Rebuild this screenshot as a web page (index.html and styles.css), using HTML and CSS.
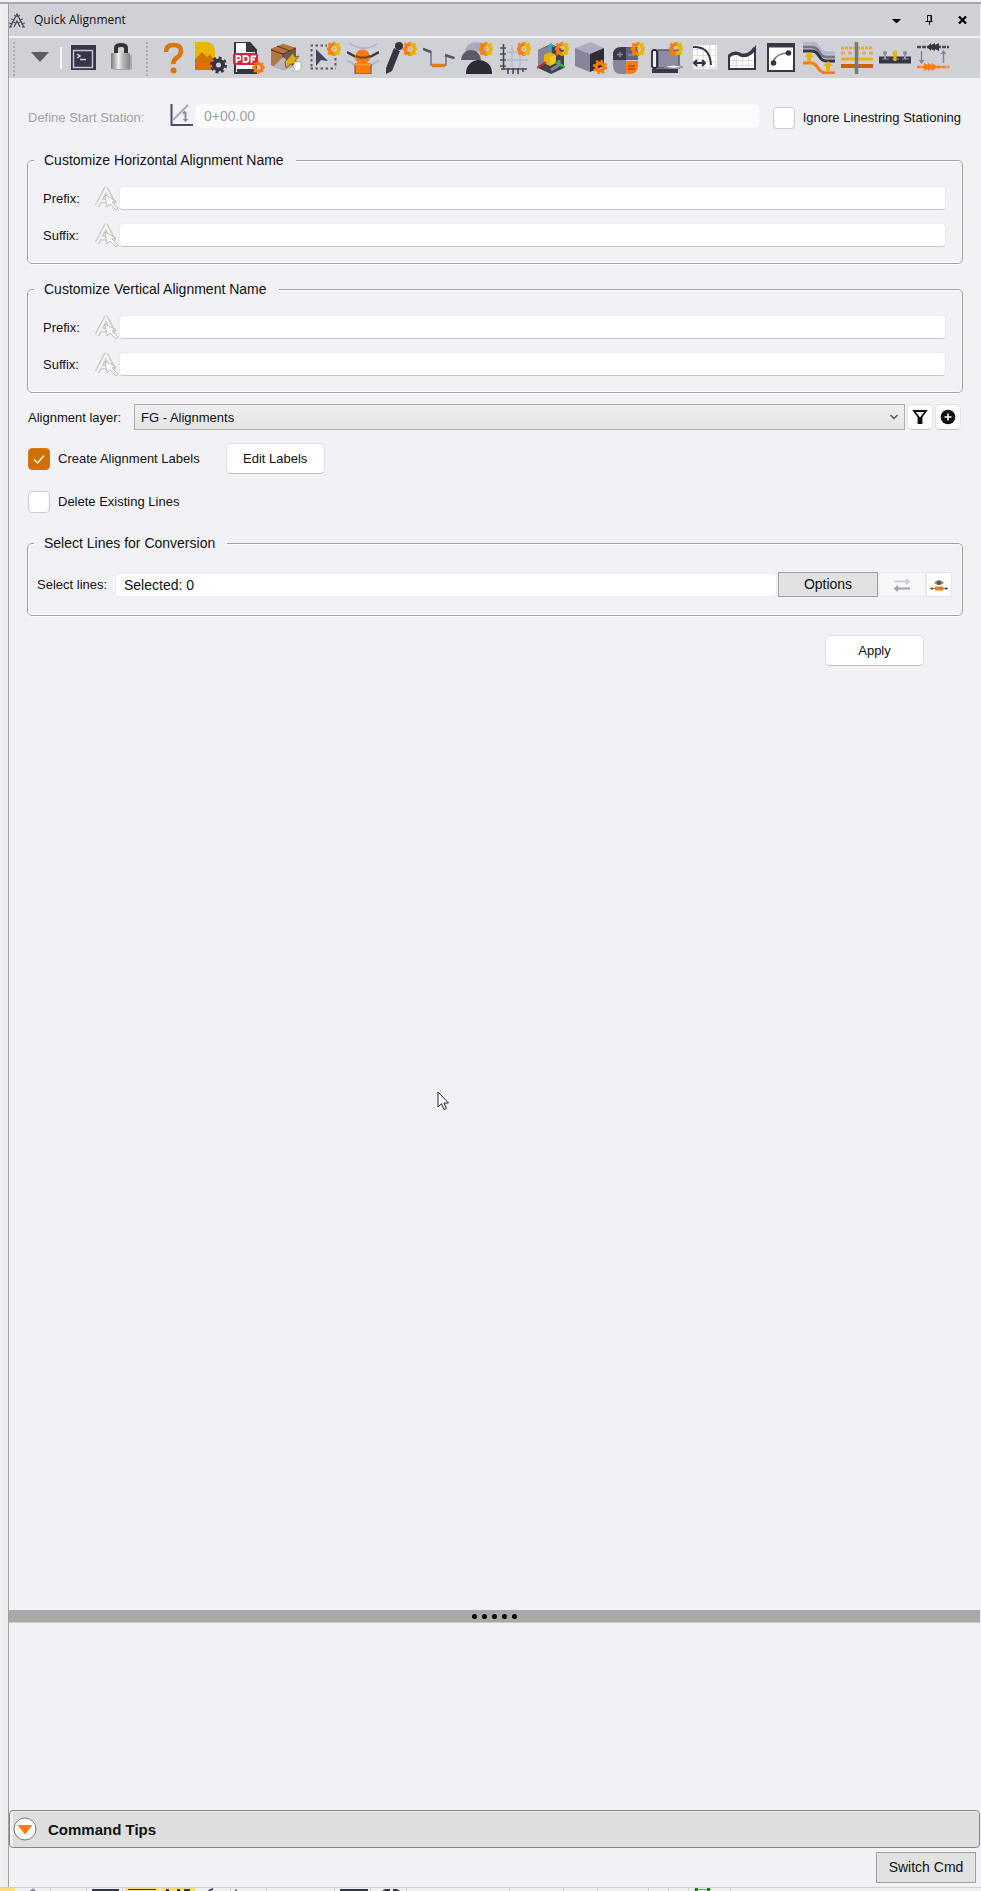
FILE: index.html
```html
<!DOCTYPE html>
<html lang="en">
<head>
<meta charset="utf-8">
<title>Quick Alignment</title>
<link rel="stylesheet" href="styles.css">
</head>
<body>
<svg class="defs" aria-hidden="true">
  <defs>
    <symbol id="gear" viewBox="0 0 14 14">
      <path d="M7 0v2M7 12v2M0 7h2M1.500 1.500l2 2M1.500 12.500l2-2" stroke="#fb7d0c" stroke-width="3"/>
      <path d="M14 7h-2M12.500 1.500l-2 2M12.500 12.500l-2-2" stroke="#eab308" stroke-width="3"/>
      <path d="M7 2.500A4.500 4.500 0 0 0 7 11.500" fill="none" stroke="#fb7d0c" stroke-width="3.600"/>
      <path d="M7 2.500A4.500 4.500 0 0 1 7 11.500" fill="none" stroke="#eab308" stroke-width="3.600"/>
      <circle cx="7" cy="7" r="1.200" fill="#eab308"/>
    </symbol>
    <symbol id="pick" viewBox="0 0 24 24">
      <path d="M2 20L11 3l8 15M6 15h8" fill="none" stroke="#c9c9c9" stroke-width="5" stroke-linejoin="round"/>
      <path d="M2 20L11 3l7 14M6 15h8" fill="none" stroke="#f4f4f2" stroke-width="2.500"/>
      <path d="M10 9l11 6-4 1 6 6-2 2-6-6-3 3z" fill="#fff" stroke="#bdbbb8"/>
    </symbol>
  </defs>
</svg>
<div class="window">
  <header class="titlebar">
    <svg class="logo" viewBox="0 0 16 15" fill="none" stroke="#4b4a5a"><path d="M1 14L8 1l7 13M5 14l3-6 3 6" stroke-width="1.300"/><path d="M0 10l4 1M2 6l4 1M5 2l3 2M16 10l-4 1M14 6l-4 1M11 2L8 4M0 14h3M13 14h3M4 9l3 1M12 9l-3 1"/></svg>
    <h1 class="title">Quick Alignment</h1>
    <button class="winbtn" aria-label="Window menu"><svg width="9" height="10" viewBox="0 0 9 10"><path d="M0 4h9L5 8H4z"/></svg></button>
    <button class="winbtn" aria-label="Pin"><svg width="9" height="10" viewBox="0 0 9 10"><path d="M2.500 6V.5h4V6M0.500 6.500h7M4.500 6v4M6 1v5" fill="none" stroke="#000"/></svg></button>
    <button class="winbtn" aria-label="Close"><svg width="9" height="10" viewBox="0 0 9 10"><path d="M1 1.500l7 7M8 1.500l-7 7" stroke="#000" stroke-width="2.300"/></svg></button>
  </header>
  <nav class="toolbar" aria-label="Commands">
    <span class="grip"></span>
    <button class="tool tool-menu" aria-label="More"><svg viewBox="0 0 32 32"><path d="M7 10h18l-9 10z" fill="#5d5e5d"/></svg></button>
    <span class="sep"></span>
    <button class="tool" aria-label="Command line"><svg viewBox="0 0 32 32"><path d="M4 3h25v25H4z" fill="#36364a"/><path d="M6.500 8.500h19v17h-19z" fill="none" stroke="#c3c3d0" stroke-width="1.500"/><path d="M10 12l3 2-3 2M13 17.500h6" fill="none" stroke="#d3d3de" stroke-width="1.500"/></svg></button>
    <button class="tool" aria-label="Lock"><svg viewBox="0 0 32 32"><defs><linearGradient id="metal"><stop offset="0" stop-color="#777"/><stop offset=".4" stop-color="#efefef"/><stop offset=".6" stop-color="#bbb"/><stop offset="1" stop-color="#858585"/></linearGradient></defs><path d="M9 13h18v15H9z" fill="#aaa"/><path d="M11 12V6q0-3 5-3t5 3v6" fill="none" stroke="#323435" stroke-width="4"/><rect x="6" y="11" width="19" height="16" rx="1" fill="url(#metal)"/></svg></button>
    <span class="grip grip-mid"></span>
    <div class="tools">
    <button class="tool" aria-label="Help"><svg viewBox="0 0 32 32"><path d="M9 10q0-7 7.500-7T24 9q0 4-4 6.500T16.500 22" fill="none" stroke="#db750a" stroke-width="4.500"/><circle cx="16.500" cy="28.500" r="3" fill="#db750a"/></svg></button>
    <button class="tool" aria-label="Image settings"><svg viewBox="0 0 32 32"><path d="M0 0h13q7 2 7 10v14H0z" fill="#ebb600"/><path d="M0 28V17l7-7 5 5 3-3 5 7v9z" fill="#d67200"/><circle cx="23.500" cy="23" r="4.500" fill="none" stroke="#353440" stroke-width="4"/><circle cx="23.500" cy="23" r="7" fill="none" stroke="#353440" stroke-width="3" stroke-dasharray="2.750"/></svg></button>
    <button class="tool" aria-label="PDF"><svg viewBox="0 0 32 32"><path d="M2 0h14l7 8v23H2z" fill="#fff" stroke="#36343e" stroke-width="2"/><path d="M13 0h3l8 10H13zM4 27h18v3H4z" fill="#36343e"/><rect x="0" y="11" width="25" height="12" rx="3" fill="#d9223b"/><path d="M3.500 21v-7h2q2 0 2 2t-2 2h-2M10.500 14v6h2q3 0 3-3t-3-3zM18.500 21v-6.500H23M18.500 17.500H22" fill="none" stroke="#fff" stroke-width="1.800"/><circle cx="25.500" cy="25.500" r="3.800" fill="none" stroke="#ff7900" stroke-width="3"/><path d="M25.500 19v3M25.500 29v3M19 25.500h3M29 25.500h3M21 21l2 2M30 21l-2 2M21 30l2-2M30 30l-2-2" stroke="#ff7900" stroke-width="2"/></svg></button>
    <button class="tool" aria-label="Package"><svg viewBox="0 0 32 32"><path d="M0 7l12-5 13 4v17L12 28 0 23z" fill="#6f5a4c"/><path d="M0 7l12-5 13 4-13 6z" fill="#bb7638"/><path d="M0 8l12 5v13L0 23z" fill="#b07a48"/><path d="M6 4l13 5M12 12v5M0 8l12 4 13-6" fill="none" stroke="#4a3424"/><path d="M2 25l10-10 10 9-10 4z" fill="#b8b5bd"/><path d="M14 20l8-9 2 4 4-1-4 5 4 2-8 1-5 4z" fill="#e1ab13" stroke="#77603a"/><path d="M24 20h6v5h1l-3 4h-6l2-2-2-2z" fill="#fff" stroke="#b9b7b2"/></svg></button>
    <button class="tool" aria-label="Select points"><svg viewBox="0 0 32 32"><path d="M1.500 3.500H18M1.500 26.500H27M2.500 7v18M26.500 16v9" fill="none" stroke="#5a5a63" stroke-width="2" stroke-dasharray="2.500 2.500"/><path d="M7 7l12 12-7-1-5 6z" fill="#45445a"/><use href="#gear" x="18" y="0" width="14" height="14"/></svg></button>
    <button class="tool" aria-label="Surveyor"><svg viewBox="0 0 32 32"><path d="M2 1q14 10 28 1M0 19q9 2 10 12M32 19q-9 2-10 12" fill="none" stroke="#b6b4cf" stroke-width="1.800"/><path d="M0 10l9 5M32 10l-9 5" stroke="#3b3b46" stroke-width="2.500"/><path d="M8 22h16v10H8z" fill="#ff7b05" stroke="#55545b"/><circle cx="15.500" cy="15" r="7.500" fill="#ff7b05"/><path d="M7 22.500h17" stroke="#eaa23b" stroke-width="1.500"/><path d="M9 14l5 2 2-1 2 1 5-2" fill="none" stroke="#6b4a35" stroke-width="2"/></svg></button>
    <button class="tool" aria-label="Edit tool"><svg viewBox="0 0 32 32"><path d="M9 6l6 3-8 20-6 3V26z" fill="#36343f"/><circle cx="14" cy="4" r="4" fill="#36343f"/><use href="#gear" x="18" y="0" width="14" height="14"/></svg></button>
    <button class="tool" aria-label="Profile"><svg viewBox="0 0 32 32"><path d="M0 7l8 3v13h15V14l9 2" fill="none" stroke="#77768a" stroke-width="1.600"/><path d="M0 7l8 3M22 13l9 3" stroke="#55545f" stroke-width="2.500"/><path d="M9 23.500h13" stroke="#e57916" stroke-width="3.500"/></svg></button>
    <button class="tool" aria-label="Site"><svg viewBox="0 0 32 32"><path d="M4 10a11 10 0 0 1 22 0z" fill="#aaa8c1"/><path d="M0 18a10 10 0 0 1 20 0z" fill="#5c5a69"/><path d="M5 32a13 13 0 0 1 26-2v2z" fill="#2d2b36"/><use href="#gear" x="18" y="0" width="14" height="14"/></svg></button>
    <button class="tool" aria-label="Scale"><svg viewBox="0 0 32 32"><path d="M8 18h21M8 10h12M13 3v22M21 12v13" stroke="#b9b8ce" stroke-width="1.500"/><path d="M4.500 2v26M1 6h6M1 12h6M1 18h6M1 24h6M2 27h26M9 26v6M14 26v6M19 26v6M24 26v4" stroke="#4b4957" stroke-width="1.600"/><use href="#gear" x="18" y="0" width="14" height="14"/></svg></button>
    <button class="tool" aria-label="3D axes"><svg viewBox="0 0 32 32"><path d="M1 8l13-6 13 6v18l-13 6-13-6z" fill="#414150"/><path d="M1 8l13-5v15L1 25z" fill="#858494"/><path d="M14 28l8-5v-5" stroke="#858494" stroke-width="3" fill="none"/><path d="M7 13l6-3 6 3v8l-6 3-6-3z" fill="#eab308"/><path d="M13 15v8l6-3v-7z" fill="#f4c91d"/><path d="M14 11V2M11 5l3-3 3 3" stroke="#35aebf" stroke-width="1.700" fill="none"/><path d="M9 20l-9 6" stroke="#d52634" stroke-width="2"/><path d="M18 20l10 5" stroke="#22c646" stroke-width="2"/><use href="#gear" x="18" y="0" width="14" height="14"/></svg></button>
    <button class="tool" aria-label="Solid"><svg viewBox="0 0 32 32"><path d="M0 6L16 0l13 6-14 6z" fill="#aeabc5"/><path d="M0 6l15 6v18L0 24z" fill="#86859b"/><path d="M15 12l14-6v18l-14 6z" fill="#2e2c37"/><circle cx="25" cy="25" r="3.800" fill="none" stroke="#f97a05" stroke-width="3.400"/><circle cx="25" cy="25" r="6" fill="none" stroke="#f97a05" stroke-width="2.500" stroke-dasharray="2.350"/></svg></button>
    <button class="tool" aria-label="Calculator"><svg viewBox="0 0 32 32"><path d="M0 18V13Q0 5 8 5h5v13z" fill="#3a3947"/><path d="M13 5h12v13H13z" fill="#65637a"/><path d="M0 18h13v14H8q-8 0-8-9z" fill="#86859b"/><path d="M13 19h12v4q0 9-8 9h-4z" fill="#ff7c0a"/><path d="M4 12.500h6M7 9.500v6M15 13h7" stroke="#8b89a0" stroke-width="1.300"/><path d="M15 24h7M15 27h7" stroke="#a94900" stroke-width="1.500"/><use href="#gear" x="18" y="0" width="14" height="14"/></svg></button>
    <button class="tool" aria-label="Sheet"><svg viewBox="0 0 32 32"><path d="M7 8h21v18H7z" fill="#8e8ca2" stroke="#5b596b" stroke-width="1.500"/><rect x="1" y="8" width="5" height="18" rx="2" fill="#eeedf5" stroke="#292732" stroke-width="1.800"/><path d="M1 29h26" stroke="#393745" stroke-width="4"/><path d="M13 25q9-4 19 0-9 3-19 0z" fill="#eeedf5" stroke="#858494"/><use href="#gear" x="18" y="0" width="14" height="14"/></svg></button>
    <button class="tool" aria-label="Curve offset"><svg viewBox="0 0 32 32"><path d="M4 3h24v24H4z" fill="#fff"/><path d="M8.500 3v24M14.500 3v24M20.500 3v24M26.500 3v24M4 7.500h24M4 13.500h24M4 19.500h24M4 25.500h24" stroke="#e2e2e6"/><path d="M4 5q17-1 18 18M6 21h9M8 18l-3 3 3 3M13 18l3 3-3 3" fill="none" stroke="#353343" stroke-width="2"/></svg></button>
    <button class="tool" aria-label="Terrain profile"><svg viewBox="0 0 32 32"><path d="M3 13q6-4 12 0t14-6v20H3z" fill="#fff"/><path d="M9.500 14v13M15.500 14v13M21.500 14v13M3 18.500h25M3 23.500h25" stroke="#dcdce0"/><path d="M2 14q6-5 12-1 8 2 14-7v21H2z" fill="none" stroke="#393745" stroke-width="2"/><path d="M2 14q6-5 12-1 8 2 14-7" fill="none" stroke="#393745" stroke-width="3.500"/></svg></button>
    <button class="tool" aria-label="Arc"><svg viewBox="0 0 32 32"><path d="M3 2h26v27H3z" fill="#fff" stroke="#393745" stroke-width="2"/><path d="M2 3.500h28" stroke="#393745" stroke-width="4"/><path d="M8 20q3-9 16-9" fill="none" stroke="#77768a" stroke-width="1.700"/><circle cx="8.500" cy="21" r="2.800" fill="#36343f"/><circle cx="23.500" cy="11" r="2.800" fill="#36343f"/></svg></button>
    <button class="tool" aria-label="Surface offset"><svg viewBox="0 0 32 32"><g fill="none" stroke-width="3"><path d="M0 1h9q4 0 7 5t7 5h9" stroke="#b5b3ce"/><path d="M0 5h9q4 0 7 5t7 5h9" stroke="#77768a"/><path d="M0 9h9q4 0 7 5t7 5h9" stroke="#36343f"/><path d="M0 21h8q4 0 7 5t8 5h9" stroke="#ff7a00"/></g><path d="M6 20v-6M25 29v-6" stroke="#eab308" stroke-width="4"/><path d="M1 15l5-5 5 5zM20 24l5-5 5 5z" fill="#eab308"/></svg></button>
    <button class="tool" aria-label="Cross sections"><svg viewBox="0 0 32 32"><path d="M0 6h32" stroke="#eab308" stroke-width="3" stroke-dasharray="3 1"/><path d="M0 11h32" stroke="#f0a068" stroke-width="3" stroke-dasharray="4 3"/><path d="M0 17h32" stroke="#eab308" stroke-width="3"/><path d="M0 24h32" stroke="#cc6200" stroke-width="4"/><path d="M15.500 0v32" stroke="#77777c" stroke-width="3.500"/></svg></button>
    <button class="tool" aria-label="Points on line"><svg viewBox="0 0 32 32"><path d="M0 18h32" stroke="#353441" stroke-width="7"/><path d="M3 17h7M13 17h7M23 17h7" stroke="#62616f" stroke-width="2"/><path d="M6 10v7M26 10v7" stroke="#9a99aa" stroke-width="2"/><path d="M16 10v9" stroke="#eab308" stroke-width="3"/><circle cx="6" cy="11" r="2" fill="#8a899b"/><circle cx="26" cy="11" r="2" fill="#8a899b"/><circle cx="16" cy="11" r="2.500" fill="#eab308"/></svg></button>
    <button class="tool" aria-label="Swap lines"><svg viewBox="0 0 32 32"><path d="M0 5h32" stroke="#4b4a55" stroke-width="2.500" stroke-dasharray="4 1"/><path d="M10 5l4-4v2l4-2v2l4-2v8l-4-2v2l-4-2v2z" fill="#36343f"/><path d="M0 25h32" stroke="#ff7c12" stroke-width="2.500" stroke-dasharray="4 1"/><path d="M7 21l4 2v-2l4 2v-2l6 4-6 4v-2l-4 2v-2l-4 2z" fill="#ff7c12"/><path d="M4.500 9v11M26.500 21V11" stroke="#85849a" stroke-width="1.500"/><path d="M1.500 18h6l-3 4zM23.500 12h6l-3-4z" fill="#85849a"/></svg></button>
    </div>
  </nav>
  <main class="content">
    <div class="row station">
      <label class="station-label" for="station">Define Start Station:</label>
      <span class="station-field">
        <svg class="station-icon" viewBox="0 0 24 24"><path d="M1.500 0v21H23" fill="none" stroke="#4f4d63" stroke-width="2"/><path d="M3 16L18 1" stroke="#aaa9bd" stroke-width="2.200"/><path d="M15.500 8v7M13 9.500l2.500-2" stroke="#8e8ca2" stroke-width="2" fill="none"/><path d="M12.500 15h6l-3 3z" fill="#8e8ca2"/></svg>
        <input class="textbox textbox-off" id="station" type="text" value="0+00.00" disabled>
      </span>
      <label class="check"><input type="checkbox">Ignore Linestring Stationing</label>
    </div>
    <fieldset class="group">
      <legend>Customize Horizontal Alignment Name</legend>
      <div class="field"><label for="hp">Prefix:</label><svg class="pick"><use href="#pick"/></svg><input class="textbox" id="hp" type="text"></div>
      <div class="field"><label for="hs">Suffix:</label><svg class="pick"><use href="#pick"/></svg><input class="textbox" id="hs" type="text"></div>
    </fieldset>
    <fieldset class="group">
      <legend>Customize Vertical Alignment Name</legend>
      <div class="field"><label for="vp">Prefix:</label><svg class="pick"><use href="#pick"/></svg><input class="textbox" id="vp" type="text"></div>
      <div class="field"><label for="vs">Suffix:</label><svg class="pick"><use href="#pick"/></svg><input class="textbox" id="vs" type="text"></div>
    </fieldset>
    <div class="row layer">
      <label class="layer-label" for="layer">Alignment layer:</label>
      <span class="combo">
        <select id="layer"><option>FG - Alignments</option></select>
        <svg class="chevron" viewBox="0 0 8 6"><path d="M.5 1L4 4.500 7.500 1" fill="none" stroke="#505050" stroke-width="1.400"/></svg>
      </span>
      <button class="iconbtn" aria-label="Filter"><svg viewBox="0 0 16 16"><path d="M2 2h12L9.500 8v6h-3V8z" fill="none" stroke="#111" stroke-width="1.800"/><path d="M7 8h2v6H7z" fill="#111"/></svg></button>
      <button class="iconbtn" aria-label="New layer"><svg viewBox="0 0 16 16"><circle cx="8" cy="8" r="7.300" fill="#111"/><path d="M8 4.500v7M4.500 8h7" stroke="#fff" stroke-width="1.500"/></svg></button>
    </div>
    <div class="row labels">
      <label class="check"><input type="checkbox" checked>Create Alignment Labels</label>
      <button class="btn">Edit Labels</button>
    </div>
    <div class="row delete">
      <label class="check"><input type="checkbox">Delete Existing Lines</label>
    </div>
    <fieldset class="group group-lines">
      <legend>Select Lines for Conversion</legend>
      <div class="lines">
        <label for="lines">Select lines:</label>
        <input class="textbox textbox-flat" id="lines" type="text" value="Selected: 0" readonly>
        <button class="btn-classic">Options</button>
        <button class="iconbtn iconbtn-wide" aria-label="Reverse" disabled><svg viewBox="0 0 16 16"><path d="M0 4.500h15M12 2l3 2.500L12 7" fill="none" stroke="#cfcdda" stroke-width="1.800"/><path d="M16 11.500H1M4 9l-3 2.500L4 14" fill="none" stroke="#a2a1a8" stroke-width="1.800"/></svg></button>
        <button class="iconbtn iconbtn-square" aria-label="Show lines"><svg viewBox="0 0 18 16"><path d="M0 11.500h18" stroke="#6d6c75"/><path d="M5 9.500h8v4H5z" fill="#ff7c12"/><path d="M1 10.500h2v2H1zM15 10.500h2v2h-2z" fill="#555"/><path d="M4 6q5-6 10 0-5 4-10 0z" fill="#88878d"/><circle cx="9" cy="6" r="2" fill="#55535f"/></svg></button>
      </div>
    </fieldset>
    <div class="actions"><button class="btn">Apply</button></div>
  </main>
  <div class="splitter"><i></i><i></i><i></i><i></i><i></i></div>
  <section class="tips-area"></section>
  <button class="tips" aria-expanded="false"><svg viewBox="0 0 24 24"><circle cx="12" cy="12" r="11" fill="#fff" stroke="#777"/><path d="M4.500 8h15L12 17.500z" fill="#ff7b17"/></svg><span>Command Tips</span></button>
  <div class="switch"><button class="btn-classic">Switch Cmd</button></div>
</div>
<footer class="status">
  <svg width="981" height="4" viewBox="0 0 981 4"><path d="M0 0h981v1H0z" fill="#cfcfd2"/><path d="M0 1h15v3H0zM125 1h34v3h-34zM161 1h34v3h-34z" fill="#ffdc7c"/><path d="M50.500 1v3M86.500 1v3M122.500 1v3M230.500 1v3M266.500 1v3M334.500 1v3M370.500 1v3M406.500 1v3M509.500 1v3M563.500 1v3M597.500 1v3M648.500 1v3M668.500 1v3M688.500 1v3M730.500 1v3" stroke="#cfcfd2"/><path d="M92 2h27v2H92zM340 2h28v2h-28z" fill="#36364a"/><path d="M128 2h28v1h-28zM166 2h3v2h-3zM177 2h3v2h-3zM184 2h6v2h-6zM208 3l5-2v2l-4 1zM382 4l3-2h5v2zM393 2h4l3 2h-7z" fill="#36364a"/><path d="M30 4q3-5 6 0zM235 2h2v2h-2z" fill="#8a889e"/><path d="M694 2h17v1h-17z" fill="#5ab15a"/><path d="M695 1h3v3h-3zM707 1h3v3h-3z" fill="#168616"/></svg>
</footer>
<svg class="cursor" width="13" height="20" viewBox="0 0 13 20" aria-hidden="true"><path d="M1 1v15l3.500-3.300L7 18.500l2.500-1L7 12h4.500z" fill="#fff" stroke="#222"/></svg>
</body>
</html>
```

FILE: styles.css
```css
* { box-sizing: border-box; }
body {
  margin: 0;
  min-height: 100vh;
  display: flex;
  flex-direction: column;
  position: relative;
  background: #f2f1f6;
  color: #111;
  font: 13px/17px "Liberation Sans", Arial, sans-serif;
}
button, input, select { font: inherit; color: inherit; margin: 0; }
button { padding: 0; }
svg { display: block; }
.defs { position: absolute; width: 0; height: 0; }

.window {
  flex: 1;
  display: flex;
  flex-direction: column;
  margin-top: 2px;
  padding-right: 1px;
  border-top: 2px solid #a8a8a8;
  background: linear-gradient(90deg, #f2f1f6 1px, #efefef 1px 8px, #a0a0a0 8px 9px, #f2f1f6 9px);
  padding-left: 9px;
}
.titlebar {
  display: flex;
  align-items: center;
  height: 32px;
  padding-right: 12px;
  background: #d0d1d6;
}
.logo { width: 16px; height: 15px; }
.title {
  flex: 1;
  margin: 0 0 0 9px;
  font: 12px/18px "Open Sans", "Noto Sans", sans-serif;
}
.winbtn {
  display: grid;
  place-items: center;
  width: 17px;
  height: 18px;
  margin-left: 16px;
  border: 0;
  background: none;
}
.winbtn:last-child { margin-right: -3px; }

.toolbar {
  display: flex;
  align-items: center;
  height: 40px;
  margin-top: 2px;
  background: #d0d1d6;
}
.grip {
  width: 5px;
  height: 35px;
  margin-left: 3px;
  background:
    radial-gradient(circle, #a9a9ae 1px, transparent 1px) 0 0 / 4px 4px;
}
.grip-mid { margin: 0 7px 0 8px; }
.sep { width: 2px; height: 22px; margin: 0 5px 0 4px; background: #f5f5f8; }
.tools { display: flex; gap: 6px; }
.tool { width: 32px; height: 32px; border: 0; background: none; }
.tool svg { width: 32px; height: 32px; }
.tool + .tool { margin-left: 6px; }
.tools .tool + .tool { margin-left: 0; }
.tool-menu { margin-left: 7px; }

.content { flex: 1; padding: 26px 17px 0 18px; }
.row { display: flex; align-items: center; margin-left: 1px; }
.station { height: 27px; margin-right: 2px; }
.station-label { width: 142px; color: #a2a1a6; }
.station-field { flex: 1; display: flex; align-self: flex-start; gap: 1px; }
.station-icon { width: 24px; height: 24px; }
.station .check { margin-left: 13px; }
.textbox {
  flex: 1;
  min-width: 0;
  height: 24px;
  padding: 0 8px;
  border: 1px solid #ececef;
  border-bottom-color: #c6c6c8;
  border-radius: 4px;
  background: #fff;
  font-size: 14px;
}
.textbox-off { border-color: #f7f7f9; background: #fcfcfd; color: #a2a1a6; }
.textbox-flat { border-bottom-color: #ececef; }
.check { display: flex; align-items: center; gap: 8px; }
.check input {
  appearance: none;
  width: 22px;
  height: 22px;
  border: 1px solid #cbcbce;
  border-radius: 4px;
  background: #fff;
}
.check input:checked {
  border-color: #d57a18;
  background: #d17000 url("data:image/svg+xml,%3Csvg xmlns='http://www.w3.org/2000/svg' viewBox='0 0 20 20'%3E%3Cpath d='M5 10.500l3.500 3.500L15 6.500' fill='none' stroke='white' stroke-width='1.300'/%3E%3C/svg%3E");
}
.group {
  display: grid;
  gap: 13px;
  min-width: 0;
  margin: 17px 0 0;
  padding: 17px 16px 16px 15px;
  border: 1px solid #a0a0a0;
  border-radius: 5px;
  box-shadow: inset 0 0 0 1px #fff, 0 1px 0 #fff;
}
.station + .group { margin-top: 21px; }
.group legend {
  margin-left: -9px;
  padding: 0 12px 0 10px;
  background: #f2f1f6;
  font-size: 14px;
}
.field { display: flex; align-items: center; }
.field label { width: 52px; }
.pick { width: 24px; height: 24px; }
.layer { height: 26px; margin-top: 11px; margin-right: 2px; gap: 2px; }
.layer-label { width: 104px; }
.combo { flex: 1; position: relative; }
.combo select {
  appearance: none;
  width: 100%;
  height: 26px;
  padding: 0 6px;
  border: 1px solid #acacac;
  border-radius: 0;
  background: linear-gradient(#f0f0f0, #e3e3e3);
}
.chevron { position: absolute; right: 7px; top: 10px; width: 8px; height: 6px; }
.btn {
  width: 99px;
  height: 31px;
  border: 1px solid #dedee1;
  border-bottom-color: #bdbdc0;
  border-radius: 5px;
  background: #fff;
}
.btn-classic {
  width: 100px;
  height: 25px;
  border: 1px solid #a0a0a0;
  background: #e2e2e2;
  font-size: 14px;
}
.iconbtn {
  display: grid;
  place-items: center;
  width: 26px;
  height: 26px;
  border: 1px solid #e3e3e6;
  border-bottom-color: #c4c4c7;
  border-radius: 5px;
  background: #fff;
}
.iconbtn svg { width: 16px; height: 16px; }
.iconbtn-wide { width: 48px; height: 25px; border-color: #eaeaee; background: #f7f7fa; }
.iconbtn-square { height: 25px; border-color: #e6e6e8; border-radius: 0; }
.iconbtn-square svg { width: 18px; }
.labels { height: 31px; margin-top: 13px; gap: 26px; }
.delete { height: 23px; margin-top: 16px; }
.group-lines { margin-top: 22px; padding: 20px 10px 18px 9px; }
.group-lines legend { margin-left: -3px; }
.lines { display: flex; align-items: center; }
.lines label { width: 78px; }
.lines .btn-classic { margin: 0 0 0 1px; }
.actions { display: flex; justify-content: flex-end; margin: 19px 39px 0 0; }

.splitter {
  display: flex;
  justify-content: center;
  align-items: center;
  gap: 5px;
  height: 13px;
  border-bottom: 1px solid #c9c9ce;
  background: #a8a8a8;
}
.splitter i { width: 5px; height: 5px; border-radius: 50%; background: #000; }
.tips-area { height: 187px; }
.tips {
  display: flex;
  align-items: center;
  gap: 11px;
  height: 38px;
  padding-left: 3px;
  border: 1px solid #858585;
  border-radius: 4px;
  background: linear-gradient(90deg, #f0f0f2 3px, #dedede 3px);
  box-shadow: inset 0 1px 0 #efefef;
  font-size: 15px;
  font-weight: bold;
}
.tips svg { width: 24px; height: 24px; }
.switch { display: flex; justify-content: flex-end; padding: 4px 4px 4px 0; }
.switch .btn-classic { height: 31px; }
.status { height: 4px; overflow: hidden; background: #f0f0f0; }
.cursor { position: absolute; left: 437px; top: 1091px; }
```
